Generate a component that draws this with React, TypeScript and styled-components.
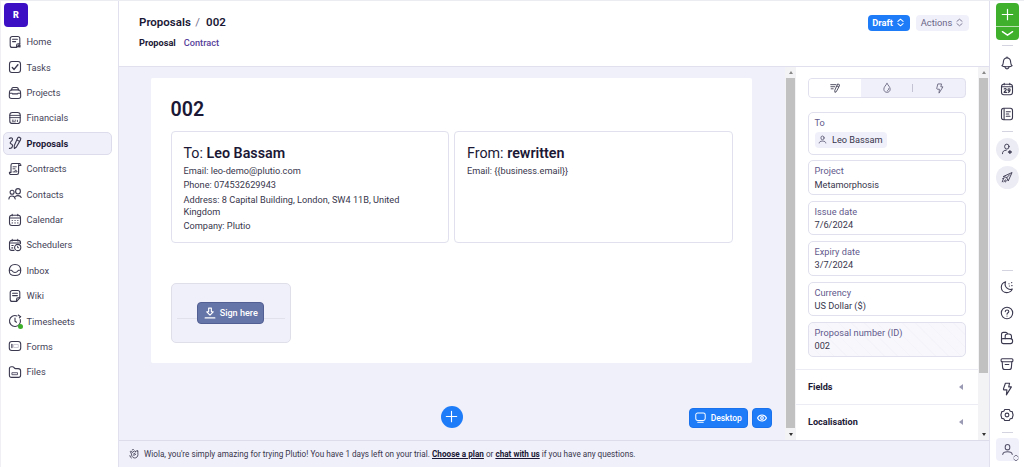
import React from "react";
import styled, { createGlobalStyle, css } from "styled-components";

const ink = "#1b1836";
const text = "#454358";
const lilac = "#62598c";
const line = "#e0e0ee";
const wash = "#f0f0fa";
const blue = "#1f7cf9";

const GlobalStyle = createGlobalStyle`
  * { box-sizing: border-box; }
  body {
    margin: 0;
    overflow: hidden;
    font-family: Roboto, "Liberation Sans", sans-serif;
    color: ${text};
    background: #fff;
  }
`;

/* ---------- icons ---------- */

const Svg = styled.svg<{ $size?: number; $color?: string; $stroke?: number }>`
  width: ${(p) => p.$size ?? 14}px;
  height: ${(p) => p.$size ?? 14}px;
  flex: none;
  display: block;
  overflow: visible;
  fill: none;
  stroke: ${(p) => p.$color ?? "#3b3950"};
  stroke-width: ${(p) => p.$stroke ?? 1.1};
  stroke-linecap: round;
  stroke-linejoin: round;
`;

const shapes = {
  note: (
    <>
      <path d="M4.2 1.5h5.6a2 2 0 0 1 2 2v5.3L8.6 12.4H4.2a2 2 0 0 1-2-2V3.5a2 2 0 0 1 2-2z" />
      <path d="M11.8 8.8h-1.7a1.5 1.5 0 0 0-1.5 1.5v2.1M4.6 4.2h4.8M4.6 6.6h3M10 11.8l2-1.6v1.8z" />
    </>
  ),
  wiki: (
    <>
      <path d="M4.2 1.5h5.6a2 2 0 0 1 2 2v5.3L8.6 12.4H4.2a2 2 0 0 1-2-2V3.5a2 2 0 0 1 2-2z" />
      <path d="M11.8 8.8h-1.7a1.5 1.5 0 0 0-1.5 1.5v2.1M4.6 4.2h4.8M4.6 6.6h4.8" />
    </>
  ),
  check: (
    <>
      <rect x="1.5" y="1.5" width="11" height="11" rx="2.4" />
      <path d="M4.3 7.6l1.8 1.8 3.8-4.6" strokeWidth="1.4" />
    </>
  ),
  briefcase: (
    <>
      <path d="M3.6 3.9c0-1.7.6-2.4 1.7-2.4h3.4c1.1 0 1.7.7 1.7 2.4" />
      <path d="M3.6 3.9h6.8c1.4 0 2 .7 2.1 2l.2 4.1c.1 1.6-.7 2.5-2.3 2.5H3.6c-1.6 0-2.4-.9-2.3-2.5l.2-4.1c.1-1.300.7-2 2.100-2z" />
      <path d="M1.500 7.300h2.600M9.900 7.300h2.600M4.600 7.900h4.800" />
    </>
  ),
  finance: (
    <>
      <rect x="1.800" y="1.500" width="10.400" height="11" rx="2.600" />
      <path d="M1.800 4.400h10.400M1.800 6.600h10.400M4.300 9.200h1M7 9.200h.6M9.400 9.200v1.400M4.300 10.800h3" strokeWidth=".9" />
    </>
  ),
  proposal: (
    <>
      <path d="M9.800 1.800l1-.7 2 1.100-.3 1.700-4.100 7.100-2 1.500-.2-2.700zM8.700 3.700l2.300 1.400" />
      <path d="M1.300 2.500c1.700-1.300 3.900-.5 3 1.400-.7 1.400-2.400 1.900-2.100 3.200.3 1.200 2.300.7 2.300 2.300 0 1.700-1.500 3-3.100 3" />
    </>
  ),
  contract: (
    <>
      <path d="M3 3.200C3 2 3.600 1.500 4.600 1.500h7c1 0 1.300.8 1.300 2H10.600v7c0 1.300-.6 2-1.800 2H3.300c-1.300 0-1.900-.7-1.900-2.100H3zM10.600 3.500c0-1.200.3-2 1.100-2" />
      <path d="M5 4.800h3.300M5 6.800h2M5 9.900h4.200l-1.500-2-1 1.500" strokeWidth=".9" />
    </>
  ),
  contacts: (
    <>
      <ellipse cx="10" cy="4.300" rx="2.400" ry="2.700" />
      <path d="M7.400 9.500c.5-.6 1.400-.9 2.600-.9 1.700 0 2.800.6 3.200 1.900" />
      <circle cx="4.100" cy="5.200" r="2" />
      <path d="M.9 12c.1-1.900 1.100-3 3.100-3s3 1.100 3.200 3" />
    </>
  ),
  calendar: (
    <>
      <rect x="1.500" y="2.200" width="11" height="10.300" rx="2.400" />
      <path d="M1.500 5h11M4.200 1.300v1.500M9.800 1.300v1.500" />
      <path d="M4.200 7.500h.1M7 7.500h.1M9.800 7.500h.1M4.200 9.900h.1M7 9.900h.1M9.800 9.900h.1" strokeWidth="1.200" />
    </>
  ),
  scheduler: (
    <>
      <path d="M6 12.400H3.700a2.200 2.200 0 0 1-2.200-2.200V4.600a2.200 2.200 0 0 1 2.200-2.200h6.600a2.200 2.200 0 0 1 2.200 2.200v1M1.500 5h11M4.200 1.400v1.500M9.800 1.400v1.500M3.800 7.500h1.400M3.800 9.900h.9" />
      <circle cx="9.700" cy="9.500" r="3.100" />
      <path d="M9.600 8.200v1.500h1" strokeWidth=".9" />
    </>
  ),
  inbox: (
    <>
      <path d="M1.300 7.500c0-3.800 2-6 5.700-6s5.700 2.200 5.700 6-1.500 5-5.700 5-5.700-1.200-5.700-5z" />
      <path d="M1.400 7.300h1.900c1.100 0 .9 2.200 3.700 2.200s2.600-2.200 3.700-2.200h1.900" />
    </>
  ),
  clock: (
    <>
      <path d="M9 1.900A5.500 5.500 0 1 0 12.300 5.600" />
      <path d="M7 4v3.200l1.500 1M10.300 1l2.200 1.800M11.400 3.800l1.300-1.100" />
    </>
  ),
  form: (
    <>
      <rect x="1.300" y="2.500" width="11.400" height="9" rx="2.500" />
      <path d="M3.900 5.400v3.200" strokeWidth="1.200" />
      <path d="M6 5.500h4.300v3H6z" stroke="#b9b8c6" strokeWidth=".7" />
    </>
  ),
  folder: (
    <>
      <path d="M1.400 10.200V3.700c0-1.300.7-2 2-2h1.200c1.500 0 1.400 1.900 3 1.900h2.600c1.500 0 2.400.7 2.400 2.200v4.400c0 1.400-.8 2.200-2.200 2.200H3.600c-1.400 0-2.200-.8-2.200-2.200z" />
      <path d="M4.300 7.700h5.200v2H4.300z" strokeWidth=".8" />
    </>
  ),
  bell: (
    <>
      <path d="M1.900 9.700c1.500-.9 1.300-2.400 1.500-4.100.2-2.200 1.500-3.600 3.600-3.600s3.400 1.400 3.600 3.600c.2 1.700 0 3.200 1.500 4.100-.6.800-2.600 1.100-5.100 1.100s-4.500-.3-5.100-1.100z" />
      <path d="M6.200 1.300h1.600M5 11c.2 1.300.9 1.900 2 1.900s1.800-.6 2-1.900" />
    </>
  ),
  date: (
    <>
      <rect x="1.500" y="2.200" width="11" height="10.500" rx="2.400" />
      <path d="M1.500 4.700h11M4.200 1.200v1.600M9.800 1.200v1.600" />
      <path d="M4.100 7.100c.4-.8 2.200-.7 2.200.4 0 1-2.200 1.500-2.200 2.900h2.400M10.100 8.400c-.8.700-2.200.3-2.200-.7 0-1.200 2.200-1.300 2.200.1 0 1.500-.5 2.400-1.900 2.600" />
    </>
  ),
  list: (
    <>
      <rect x="1.500" y="1.300" width="11" height="11.400" rx="2.200" />
      <path d="M4.100 1.500v11M6.300 4.700h4M6.300 7h2.500M6.300 9.300h3.700" />
    </>
  ),
  userPlus: (
    <>
      <ellipse cx="6.800" cy="4.200" rx="2.600" ry="2.900" />
      <path d="M1.700 12.500c0-2.700 1.600-4.100 4.400-4.100" />
      <path d="M10.400 8.800v3.400M8.700 10.500h3.400" strokeWidth="1.500" />
    </>
  ),
  rocket: (
    <>
      <path d="M3 6.300l9.900-4.500-4.500 9.900-1.700-3.800z" />
      <path d="M6.700 7.900l3.300-3.500M3 8.700l-1.500 3.900M5 10.300l-1.600 2.400M3.600 8.200L2 8.700M6 10.900l-.6 1.900" />
    </>
  ),
  moon: (
    <>
      <path d="M5.600 1.700C2.900 2.500 1.300 4.700 1.300 7.200c0 3.100 2.400 5.400 5.500 5.400 2.400 0 4.600-1.400 5.500-3.500-3.900 1.700-8.700-2.300-6.700-7.400z" />
      <path d="M8.900 3.700h.2M11.600 2.600h.2M9.300 6h.2M11.700 5.600h.4" />
    </>
  ),
  help: (
    <>
      <circle cx="7" cy="7" r="5.700" />
      <path d="M5.300 5.600c0-2.300 3.500-2.100 3.500-.1C8.800 6.800 7 6.800 7 8.200M7 10v.1" />
    </>
  ),
  store: (
    <>
      <path d="M1.500 10.300V3.400c0-1.300.7-2 1.900-2h2.300c.9 0 1.500.5 1.900 1.400" />
      <path d="M5.200 7.600V5.300c0-1.500.8-2.300 2.100-2.300h1.600c1.700 0 2.600.9 2.600 2.500v2" />
      <path d="M1.500 8.600c0-.7.5-1 1.300-1h7.500c1.600 0 2.300.7 2.300 2.100v.9c0 1.300-.7 2-2.100 2H3.600c-1.400 0-2.100-.8-2.100-2.200z" />
    </>
  ),
  archive: (
    <>
      <rect x="1.100" y="1.700" width="11.800" height="3.100" rx="1" />
      <path d="M2.200 4.900l.4 5.500c.1 1.400.8 2.100 2.100 2.100h4.600c1.300 0 2-.7 2.100-2.100l.4-5.500M5.200 7.500h3.600" />
    </>
  ),
  bolt: (
    <path d="M5.400 1.200h4.200L8.700 4.900h2.700L6.400 12.900l.5-5H4.400c-.8 0-1.100-.4-.9-1.200z" />
  ),
  gear: (
    <>
      <path d="M4.700 1.500h4.600l.9 1.800 2 .3.900 3.400-.9 3.400-2 .3-.9 1.800H4.700l-.9-1.800-2-.3L.9 7l.9-3.400 2-.3z" />
      <circle cx="7" cy="7" r="1.900" />
    </>
  ),
  user: (
    <>
      <ellipse cx="7" cy="4.500" rx="2.500" ry="2.900" />
      <path d="M1.900 12.400c.2-2 1.800-2.900 5.100-2.900s4.900.9 5.100 2.900" />
    </>
  ),
  edit: (
    <>
      <path d="M11.300 1.500l2 .9-.4 2.200-4.100 7.600-1.900.9-.2-2.300zM10 4.300l2 1" />
      <path d="M1 2.300h7.400M1.200 5.200h5.600M1.600 8.100h2.900" />
    </>
  ),
  drop: (
    <>
      <path d="M7 .8C5.100 3.400 2.600 5.800 2.600 8.700c0 2.600 1.800 4.300 4.400 4.300s4.400-1.700 4.400-4.300C11.400 5.800 8.900 3.400 7 .8z" />
      <path d="M9.300 8c.1 1.400-.6 2.400-1.800 2.800" />
    </>
  ),
  updown: <path d="M3 5.200L7 1.900l4 3.300M3 8.800l4 3.300 4-3.300" />,
  plus: <path d="M7 1.400v11.200M1.400 7h11.200" />,
  down: <path d="M1.500 5L7 8.800 12.500 5" />,
  sign: (
    <path d="M5.400 1.300h3.200v4.300h2.200L7 9.500 3.200 5.600h2.200zM1.300 12.700h11.400" />
  ),
  desktop: (
    <>
      <rect x="1" y="1.200" width="12" height="9.600" rx="2.400" />
      <path d="M3.500 12.900h7" />
    </>
  ),
  eye: (
    <>
      <path d="M.7 7c1.500-2.900 3.700-4.200 6.300-4.200S11.800 4.100 13.300 7c-1.500 2.900-3.700 4.200-6.300 4.200S2.200 9.900.7 7z" />
      <circle cx="7" cy="7" r="1.900" />
    </>
  ),
  wave: (
    <>
      <path d="M3.300 6.600L2 3.900c-.4-1 .9-1.600 1.400-.7l1 1.700 3.300-2.200c.9-.5 1.600.5.900 1.200l2.100-1.300c1-.5 1.600.6.800 1.200.9-.3 1.500.7.800 1.300.8 3.800-.3 6.500-3 7.300-2.600.7-4.700-.6-5.500-3.300z" />
      <path d="M6 7.300l2.600-1.700M6.700 9l2.700-1.600M4.600 1.200l1.500-.4M1.300 9.300l.8 2.200 1.300 1M12 2l.8.900" />
    </>
  ),
};

type IconName = keyof typeof shapes;

function Icon({ name, size, color, stroke }: { name: IconName; size?: number; color?: string; stroke?: number }) {
  return (
    <Svg viewBox="0 0 14 14" $size={size} $color={color} $stroke={stroke} aria-hidden>
      {shapes[name]}
    </Svg>
  );
}

/* ---------- shell ---------- */

const Shell = styled.div`
  display: grid;
  grid-template-columns: 119px 1fr 35px;
  grid-template-rows: minmax(0, 1fr);
  width: 1024px;
  height: 467px;
  border-top: 1px solid #ebebf2;
  background: #fff;
`;

const Sidebar = styled.nav`
  border-right: 1px solid ${line};
  border-left: 1px solid #f0f0f4;
  padding: 2px 6px 0 2px;
`;

const Brand = styled.div`
  display: flex;
  align-items: center;
  justify-content: center;
  width: 24px;
  height: 24px;
  margin: 0 0 3.6px 1px;
  border-radius: 4px;
  background: #3c0fc4;
  color: #fff;
  font-size: 9px;
  font-weight: 900;
`;

const NavItem = styled.a<{ $active?: boolean }>`
  display: flex;
  align-items: center;
  height: 22.4px;
  margin-bottom: 3px;
  padding-left: 4px;
  gap: 4.5px;
  border: 1px solid transparent;
  border-radius: 5px;
  font-size: 9.25px;
  ${(p) =>
    p.$active &&
    css`
      color: ${ink};
      font-weight: 700;
      background: ${wash};
      border-color: #dcdcec;
    `}
`;

const IconSlot = styled.span`
  position: relative;
  width: 14px;
  height: 14px;
`;

const Dot = styled.i`
  position: absolute;
  right: -1px;
  bottom: -1px;
  width: 5px;
  height: 5px;
  border-radius: 50%;
  background: #3dae2b;
`;

const Main = styled.main`
  display: grid;
  grid-template-rows: 65px minmax(0, 1fr) 27px;
  min-width: 0;
`;

const Header = styled.header`
  display: flex;
  justify-content: space-between;
  padding: 13px 20px 0 20px;
`;

const Crumbs = styled.h1`
  display: flex;
  gap: 4.5px;
  margin: 0;
  line-height: 17px;
  font-size: 11.5px;
  font-weight: 600;
  color: ${ink};
`;

const Slash = styled.span`
  font-weight: 400;
  color: #77748f;
  margin-right: 1.5px;
`;

const SubTabs = styled.div`
  display: flex;
  gap: 8px;
  margin-top: 6px;
`;

const SubTab = styled.a<{ $active?: boolean }>`
  font-size: 9.2px;
  line-height: 12px;
  font-weight: ${(p) => (p.$active ? 700 : 500)};
  color: ${(p) => (p.$active ? ink : "#56409a")};
`;

const HeaderActions = styled.div`
  display: flex;
  gap: 6.5px;
  padding-top: 0.5px;
`;

const Pill = styled.button<{ $primary?: boolean }>`
  display: flex;
  align-items: center;
  justify-content: center;
  gap: 3px;
  width: ${(p) => (p.$primary ? 42 : 53)}px;
  height: 16px;
  padding: 0;
  border: 0;
  border-radius: 4px;
  font: ${(p) => (p.$primary ? 700 : 400)} 9.3px Roboto, sans-serif;
  color: ${(p) => (p.$primary ? "#fff" : "#6a6587")};
  background: ${(p) => (p.$primary ? blue : wash)};
`;

const Work = styled.div`
  display: grid;
  grid-template-columns: 1fr 11px 182px 11px;
  grid-template-rows: minmax(0, 1fr);
  border-top: 1px solid ${line};
  background: ${wash};
  min-height: 0;
`;

const Canvas = styled.section`
  display: flex;
  flex-direction: column;
`;

const Sheet = styled.article`
  width: 601.5px;
  height: 285px;
  margin: 11px 0 0 31.5px;
  padding: 20px 20px 0;
  border-radius: 2px;
  background: #fff;
`;

const SheetTitle = styled.h2`
  margin: 0 0 9px;
  font-size: 19.6px;
  line-height: 24px;
  font-weight: 600;
  color: ${ink};
`;

const Parties = styled.div`
  display: grid;
  grid-template-columns: 278.5px 278.5px;
  gap: 5px;
`;

const Party = styled.div`
  height: 111.5px;
  padding: 11.5px 12px 0;
  border: 1px solid ${line};
  border-radius: 4px;
`;

const PartyName = styled.h3`
  margin: 0 0 2.4px;
  font-size: 14.3px;
  line-height: 19px;
  font-weight: 400;
  color: ${ink};
  b { font-weight: 600; }
`;

const PartyLine = styled.p`
  width: 232px;
  margin: 0 0 3px;
  font-size: 9.2px;
  line-height: 11.6px;
  color: #38364c;
`;

const Signature = styled.div`
  display: grid;
  grid-template-columns: 1fr auto 1fr;
  align-items: center;
  width: 120.5px;
  height: 60px;
  margin-top: 40px;
  padding: 0 5px;
  border: 1px solid #dfdfea;
  border-radius: 5px;
  background: ${wash};
`;

const SignRule = styled.span`
  height: 1px;
  margin-top: 12px;
  background: #e1e1ec;
`;

const SignButton = styled.button`
  display: flex;
  align-items: center;
  justify-content: center;
  gap: 4px;
  width: 67px;
  height: 22px;
  padding: 0;
  border: 1px solid #525f92;
  border-radius: 4px;
  background: #6675a8;
  color: #fff;
  font: 500 9.1px Roboto, sans-serif;
`;

const CanvasBar = styled.div`
  display: grid;
  grid-template-columns: 1fr auto 1fr;
  align-items: center;
  margin: 42.5px 13px 0 12px;
`;

const AddButton = styled.button`
  display: flex;
  align-items: center;
  justify-content: center;
  grid-column: 2;
  width: 22px;
  height: 22px;
  padding: 0;
  border: 0;
  border-radius: 50%;
  background: ${blue};
`;

const ViewTools = styled.div`
  display: flex;
  justify-content: flex-end;
  gap: 4px;
  margin-top: 2px;
`;

const ViewButton = styled.button<{ $width: number }>`
  display: flex;
  align-items: center;
  justify-content: center;
  gap: 4.5px;
  width: ${(p) => p.$width}px;
  height: 20px;
  padding: 0;
  border: 1px solid #1a72ec;
  border-radius: 4px;
  background: ${blue};
  color: #fff;
  font: 500 8.5px Roboto, sans-serif;
`;

/* ---------- scrollbars ---------- */

const Track = styled.div`
  display: flex;
  flex-direction: column;
  align-items: center;
  background: #f3f3f5;
`;

const Thumb = styled.div<{ $height: number }>`
  width: 9px;
  height: ${(p) => p.$height}px;
  margin: 4px 0 auto;
  background: #c1c1c1;
`;

const Arrow = styled.i<{ $down?: boolean }>`
  width: 0;
  height: 0;
  margin: ${(p) => (p.$down ? "0 0 4px" : "4px 0 0")};
  border: 2.5px solid transparent;
  ${(p) =>
    p.$down
      ? css`border-top: 3px solid #333; border-bottom: 0;`
      : css`border-bottom: 3px solid #888; border-top: 0;`}
`;

function Scrollbar({ height }: { height: number }) {
  return (
    <Track>
      <Arrow />
      <Thumb $height={height} />
      <Arrow $down />
    </Track>
  );
}

/* ---------- properties panel ---------- */

const Panel = styled.aside`
  background: #fff;
  padding: 11px 0 0;
  overflow: hidden;
`;

const Segments = styled.div`
  display: grid;
  grid-template-columns: repeat(3, 1fr);
  height: 20px;
  margin: 0 12px 13.5px 12px;
  border: 1px solid ${line};
  border-radius: 4px;
  overflow: hidden;
  background: ${wash};
`;

const Segment = styled.div<{ $active?: boolean; $divided?: boolean }>`
  display: flex;
  align-items: center;
  justify-content: center;
  background: ${(p) => (p.$active ? "#fff" : "transparent")};
  ${(p) =>
    p.$divided &&
    css`
      &::before {
        content: "";
        width: 1px;
        height: 8px;
        margin-right: 21px;
        margin-left: -21px;
        background: #c4c3d4;
      }
    `}
`;

const Field = styled.div<{ $height?: number; $locked?: boolean }>`
  height: ${(p) => p.$height ?? 34.9}px;
  margin: 0 12px 5.6px 12px;
  padding: 3px 5.5px;
  border: 1px solid ${line};
  border-radius: 5px;
  font-size: 9.2px;
  line-height: 13.4px;
  color: #38364c;
  ${(p) =>
    p.$locked &&
    css`
      background: repeating-linear-gradient(45deg, #f8f8fc 0 8px, #f4f4fa 8px 9px);
    `}
`;

const Label = styled.div`
  color: ${lilac};
  letter-spacing: 0.04px;
`;

const Chip = styled.span`
  display: inline-flex;
  align-items: center;
  gap: 5.5px;
  height: 16px;
  margin-top: 3px;
  padding: 0 4px 0 3px;
  border-radius: 4px;
  background: ${wash};
`;

const Fold = styled.div`
  display: flex;
  align-items: center;
  justify-content: space-between;
  height: 35.3px;
  padding: 0 15px 0 12px;
  border-top: 1px solid #ececf4;
  font-size: 9.1px;
  font-weight: 700;
  color: ${ink};
`;

const Folds = styled.div`
  margin-top: 12px;
`;

const Caret = styled.i`
  border: 3.5px solid transparent;
  border-right: 4px solid #9b9ab4;
  border-left: 0;
`;

/* ---------- footer and rail ---------- */

const Footer = styled.footer`
  display: flex;
  align-items: center;
  padding-left: 10px;
  gap: 5px;
  border-top: 1px solid #dcdcea;
  background: ${wash};
  font-size: 8.18px;
  color: #38364c;
  b {
    color: ${ink};
    font-weight: 700;
    text-decoration: underline;
  }
`;

const Rail = styled.div`
  display: flex;
  flex-direction: column;
  align-items: center;
  border-left: 1px solid ${line};
  padding: 2px 0 4px;
`;

const Create = styled.div`
  display: grid;
  grid-template-rows: 23px 14px;
  width: 23px;
  height: 37px;
  border-radius: 4px;
  overflow: hidden;
  background: #3eb02c;
  > * {
    display: flex;
    align-items: center;
    justify-content: center;
  }
  > * + * { border-top: 1px solid #b7e2b0; }
`;

const RailRule = styled.i<{ $top: number; $bottom: number }>`
  flex: none;
  width: 11px;
  height: 1px;
  margin: ${(p) => p.$top}px 0 ${(p) => p.$bottom}px;
  background: #d4d3e0;
`;

const RailGroup = styled.div<{ $gap: number }>`
  display: flex;
  flex-direction: column;
  align-items: center;
  gap: ${(p) => p.$gap}px;
`;

const RoundButton = styled.span`
  display: flex;
  align-items: center;
  justify-content: center;
  width: 23px;
  height: 23px;
  border-radius: 50%;
  background: #ececf5;
`;

const Account = styled.div`
  position: relative;
  display: flex;
  align-items: center;
  justify-content: center;
  width: 23px;
  height: 23px;
  border-radius: 4px;
  background: ${wash};
`;

const AccountToggle = styled.span`
  position: absolute;
  right: -1px;
  bottom: -1px;
`;

const nav: { label: string; icon: IconName; active?: boolean; dot?: boolean }[] = [
  { label: "Home", icon: "note" },
  { label: "Tasks", icon: "check" },
  { label: "Projects", icon: "briefcase" },
  { label: "Financials", icon: "finance" },
  { label: "Proposals", icon: "proposal", active: true },
  { label: "Contracts", icon: "contract" },
  { label: "Contacts", icon: "contacts" },
  { label: "Calendar", icon: "calendar" },
  { label: "Schedulers", icon: "scheduler" },
  { label: "Inbox", icon: "inbox" },
  { label: "Wiki", icon: "wiki" },
  { label: "Timesheets", icon: "clock", dot: true },
  { label: "Forms", icon: "form" },
  { label: "Files", icon: "folder" },
];

const fields = [
  ["Project", "Metamorphosis"],
  ["Issue date", "7/6/2024"],
  ["Expiry date", "3/7/2024"],
  ["Currency", "US Dollar ($)"],
];

const tools: IconName[] = ["moon", "help", "store", "archive", "bolt", "gear"];

export default function App() {
  return (
    <>
      <GlobalStyle />
      <Shell>
        <Sidebar>
          <Brand>R</Brand>
          {nav.map((n) => (
            <NavItem key={n.label} $active={n.active}>
              <IconSlot>
                <Icon name={n.icon} />
                {n.dot && <Dot />}
              </IconSlot>
              {n.label}
            </NavItem>
          ))}
        </Sidebar>

        <Main>
          <Header>
            <div>
              <Crumbs>
                <span>Proposals</span>
                <Slash>/</Slash>
                <span>002</span>
              </Crumbs>
              <SubTabs>
                <SubTab $active>Proposal</SubTab>
                <SubTab>Contract</SubTab>
              </SubTabs>
            </div>
            <HeaderActions>
              <Pill $primary>
                Draft <Icon name="updown" size={9} color="#fff" stroke={1.6} />
              </Pill>
              <Pill>
                Actions <Icon name="updown" size={9} color="#77748f" stroke={1.4} />
              </Pill>
            </HeaderActions>
          </Header>

          <Work>
            <Canvas>
              <Sheet>
                <SheetTitle>002</SheetTitle>
                <Parties>
                  <Party>
                    <PartyName>To: <b>Leo Bassam</b></PartyName>
                    <PartyLine>Email: leo-demo@plutio.com</PartyLine>
                    <PartyLine>Phone: 074532629943</PartyLine>
                    <PartyLine>Address: 8 Capital Building, London, SW4 11B, United Kingdom</PartyLine>
                    <PartyLine>Company: Plutio</PartyLine>
                  </Party>
                  <Party>
                    <PartyName>From: <b>rewritten</b></PartyName>
                    <PartyLine>{"Email: {{business.email}}"}</PartyLine>
                  </Party>
                </Parties>
                <Signature>
                  <SignRule />
                  <SignButton>
                    <Icon name="sign" size={12} color="#fff" stroke={1.3} />
                    Sign here
                  </SignButton>
                  <SignRule />
                </Signature>
              </Sheet>
              <CanvasBar>
                <AddButton>
                  <Icon name="plus" size={13} color="#fff" stroke={1.2} />
                </AddButton>
                <ViewTools>
                  <ViewButton $width={59}>
                    <Icon name="desktop" size={11} color="#fff" stroke={1.3} />
                    Desktop
                  </ViewButton>
                  <ViewButton $width={20}>
                    <Icon name="eye" size={10} color="#fff" stroke={1.5} />
                  </ViewButton>
                </ViewTools>
              </CanvasBar>
            </Canvas>
            <Scrollbar height={350} />
            <Panel>
              <Segments>
                <Segment $active><Icon name="edit" size={10} stroke={1.2} /></Segment>
                <Segment><Icon name="drop" size={10} stroke={1.2} color="#62607a" /></Segment>
                <Segment $divided><Icon name="bolt" size={11} stroke={1.1} color="#62607a" /></Segment>
              </Segments>
              <Field $height={43}>
                <Label>To</Label>
                <Chip>
                  <Icon name="user" size={9} stroke={1.4} color="#62607a" />
                  Leo Bassam
                </Chip>
              </Field>
              {fields.map(([label, value]) => (
                <Field key={label}>
                  <Label>{label}</Label>
                  {value}
                </Field>
              ))}
              <Field $locked>
                <Label>Proposal number (ID)</Label>
                002
              </Field>
              <Folds>
                <Fold>Fields <Caret /></Fold>
                <Fold>Localisation <Caret /></Fold>
              </Folds>
            </Panel>
            <Scrollbar height={295} />
          </Work>

          <Footer>
            <Icon name="wave" size={10} stroke={1.2} />
            <span>
              Wiola, you're simply amazing for trying Plutio! You have 1 days left on your trial.{" "}
              <b>Choose a plan</b> or <b>chat with us</b> if you have any questions.
            </span>
          </Footer>
        </Main>

        <Rail>
          <Create>
            <span><Icon name="plus" size={13} color="#fff" stroke={1.3} /></span>
            <span><Icon name="down" size={13} color="#fff" stroke={1.5} /></span>
          </Create>
          <RailRule $top={5} $bottom={10} />
          <RailGroup $gap={11.5}>
            <Icon name="bell" />
            <Icon name="date" />
            <Icon name="list" />
          </RailGroup>
          <RailRule $top={10} $bottom={5.5} />
          <RailGroup $gap={5}>
            <RoundButton><Icon name="userPlus" size={12} /></RoundButton>
            <RoundButton><Icon name="rocket" size={12} /></RoundButton>
          </RailGroup>
          <RailRule $top={81} $bottom={9.5} />
          <RailGroup $gap={11.5}>
            {tools.map((t) => (
              <Icon key={t} name={t} />
            ))}
          </RailGroup>
          <RailRule $top={10} $bottom={5} />
          <Account>
            <Icon name="user" size={13} color="#56546c" />
            <AccountToggle>
              <Icon name="updown" size={8} color="#56546c" stroke={1.3} />
            </AccountToggle>
          </Account>
        </Rail>
      </Shell>
    </>
  );
}
